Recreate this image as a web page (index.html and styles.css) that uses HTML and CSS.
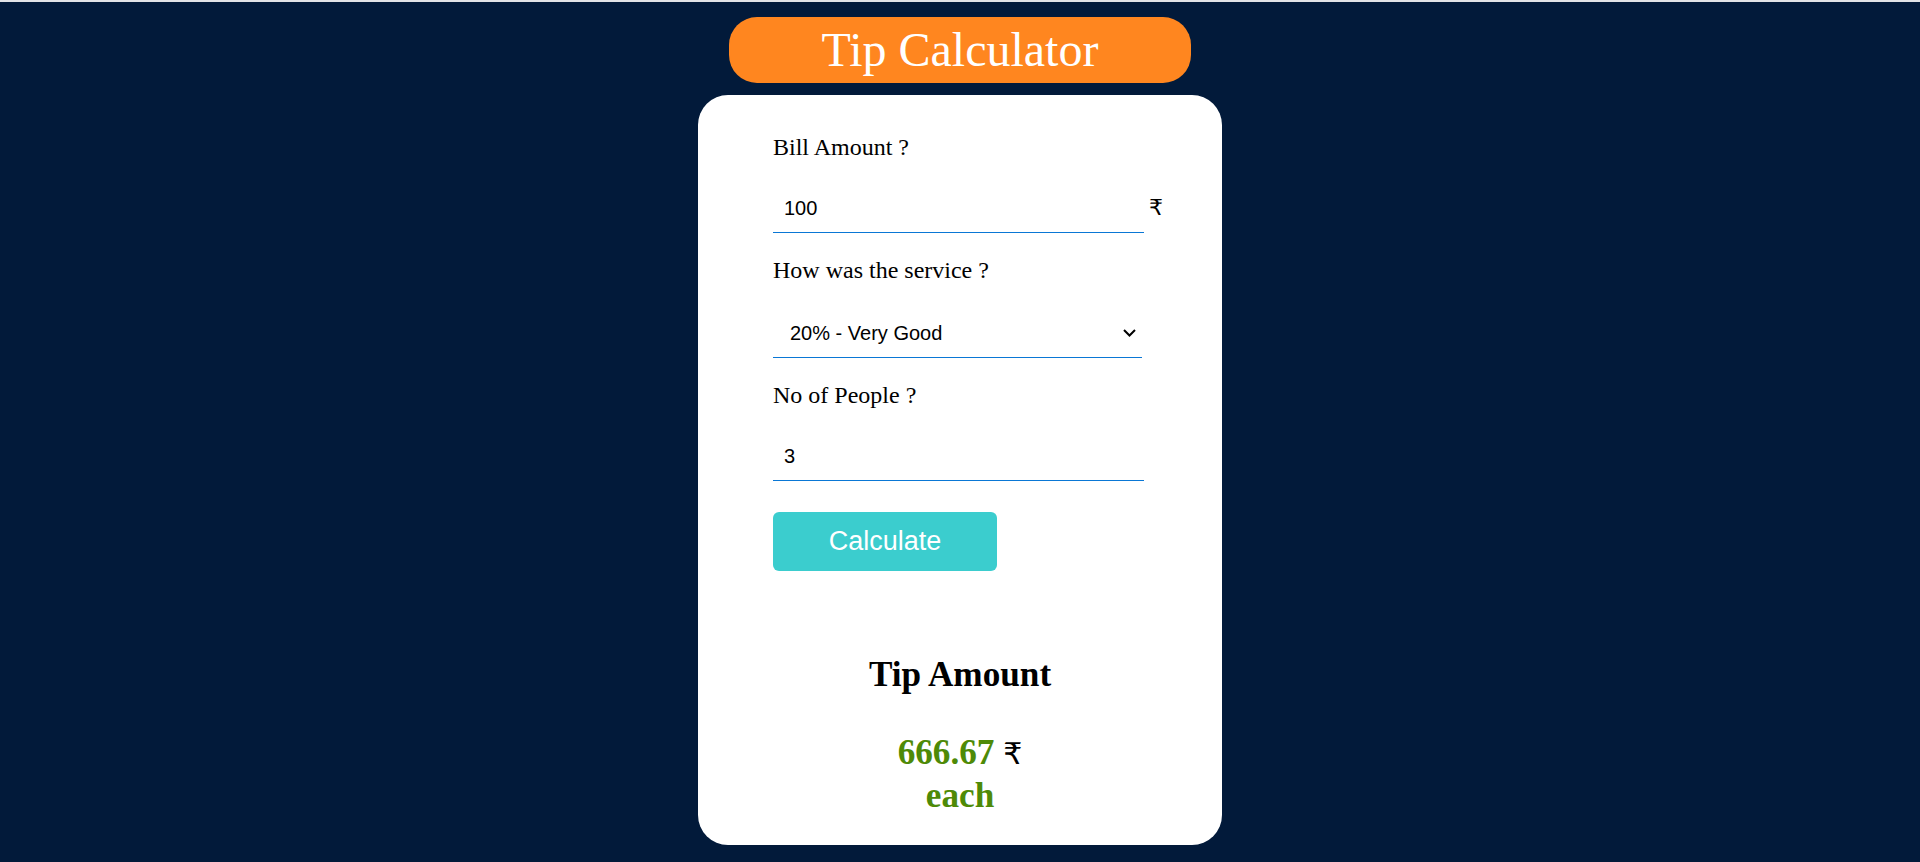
FILE: index.html
```html
<!DOCTYPE html>
<html lang="en">
<head>
<meta charset="UTF-8">
<title>Tip Calculator</title>
<link rel="stylesheet" href="styles.css">
</head>
<body>
  <main class="app">
    <h1 class="title">Tip Calculator</h1>
    <section class="card">
      <p class="label">Bill Amount ?</p>
      <div class="field">
        <input class="text-input" type="text" value="100">
        <span class="unit">₹</span>
      </div>

      <p class="label">How was the service ?</p>
      <div class="select-wrap">
        <select class="select">
          <option>20% - Very Good</option>
          <option>15% - Good</option>
          <option>10% - Okay</option>
          <option>5% - Bad</option>
        </select>
        <svg class="chevron" width="13" height="8" viewBox="0 0 13 8" aria-hidden="true">
          <polyline points="1,1 6.5,6.5 12,1" fill="none" stroke="#000" stroke-width="2"/>
        </svg>
      </div>

      <p class="label">No of People ?</p>
      <div class="field">
        <input class="text-input" type="text" value="3">
      </div>

      <button class="calc-btn" type="button">Calculate</button>

      <div class="tip">
        <h2 class="tip-title">Tip Amount</h2>
        <p class="tip-result"><span class="tip-value">666.67</span> <span class="tip-unit">₹</span><span class="tip-each">each</span></p>
      </div>
    </section>
  </main>
</body>
</html>
```

FILE: styles.css
```css
* {
  box-sizing: border-box;
}

html, body {
  margin: 0;
  padding: 0;
}

body {
  background: #021a3a;
  border-top: 2px solid #e2e3e6;
  font-family: "Liberation Serif", "DejaVu Sans", serif;
  color: #000;
  min-height: 862px;
}

.app {
  display: flex;
  flex-direction: column;
  align-items: center;
}

.title {
  margin: 15px 0 0;
  width: 462px;
  height: 66px;
  background: #ff861f;
  color: #fff;
  border-radius: 28px;
  font-family: "Liberation Serif", serif;
  font-weight: normal;
  font-size: 48px;
  line-height: 66px;
  text-align: center;
}

.card {
  margin-top: 12px;
  width: 524px;
  background: #fff;
  border-radius: 30px;
  padding: 38px 75px 28px;
  display: flex;
  flex-direction: column;
  align-items: flex-start;
}

.label {
  margin: 0 0 24px;
  font-size: 24px;
  line-height: 28px;
}

.field {
  display: flex;
  align-items: baseline;
  gap: 5px;
  margin-bottom: 23px;
}

.text-input {
  width: 371px;
  height: 48px;
  padding: 0 11px;
  border: none;
  border-bottom: 1px solid #0a77d5;
  outline: none;
  background: transparent;
  font-family: "Liberation Sans", Arial, sans-serif;
  font-size: 20px;
  color: #000;
}

.unit {
  font-family: "DejaVu Sans", "Noto Sans", sans-serif;
  font-size: 22px;
  line-height: 28px;
}

.select-wrap {
  position: relative;
  width: 369px;
  margin-bottom: 23px;
}

.select {
  display: block;
  width: 100%;
  height: 50px;
  padding: 0 0 0 17px;
  border: none;
  border-bottom: 1px solid #0a77d5;
  border-radius: 0;
  outline: none;
  background: #fff;
  -webkit-appearance: none;
  appearance: none;
  font-family: "Liberation Sans", Arial, sans-serif;
  font-size: 20px;
  color: #000;
}

.chevron {
  position: absolute;
  left: 350px;
  top: 21px;
  pointer-events: none;
}

.calc-btn {
  margin-top: 8px;
  width: 224px;
  height: 59px;
  border: none;
  border-radius: 6px;
  background: #3bcdce;
  color: #fff;
  font-family: "Liberation Sans", Arial, sans-serif;
  font-size: 27px;
  cursor: pointer;
}

.tip {
  align-self: stretch;
  text-align: center;
  margin-top: 84px;
}

.tip-title {
  margin: 0;
  font-size: 35.2px;
  line-height: 40px;
  font-weight: bold;
}

.tip-result {
  margin: 36px 0 0;
  font-size: 35.2px;
  line-height: 43px;
  font-weight: bold;
}

.tip-value,
.tip-each {
  color: #4e8a07;
}

.tip-each {
  display: block;
}

.tip-unit {
  font-family: "DejaVu Sans", "Noto Sans", sans-serif;
  font-weight: normal;
  font-size: 30px;
  line-height: 1;
  color: #000;
}
```
